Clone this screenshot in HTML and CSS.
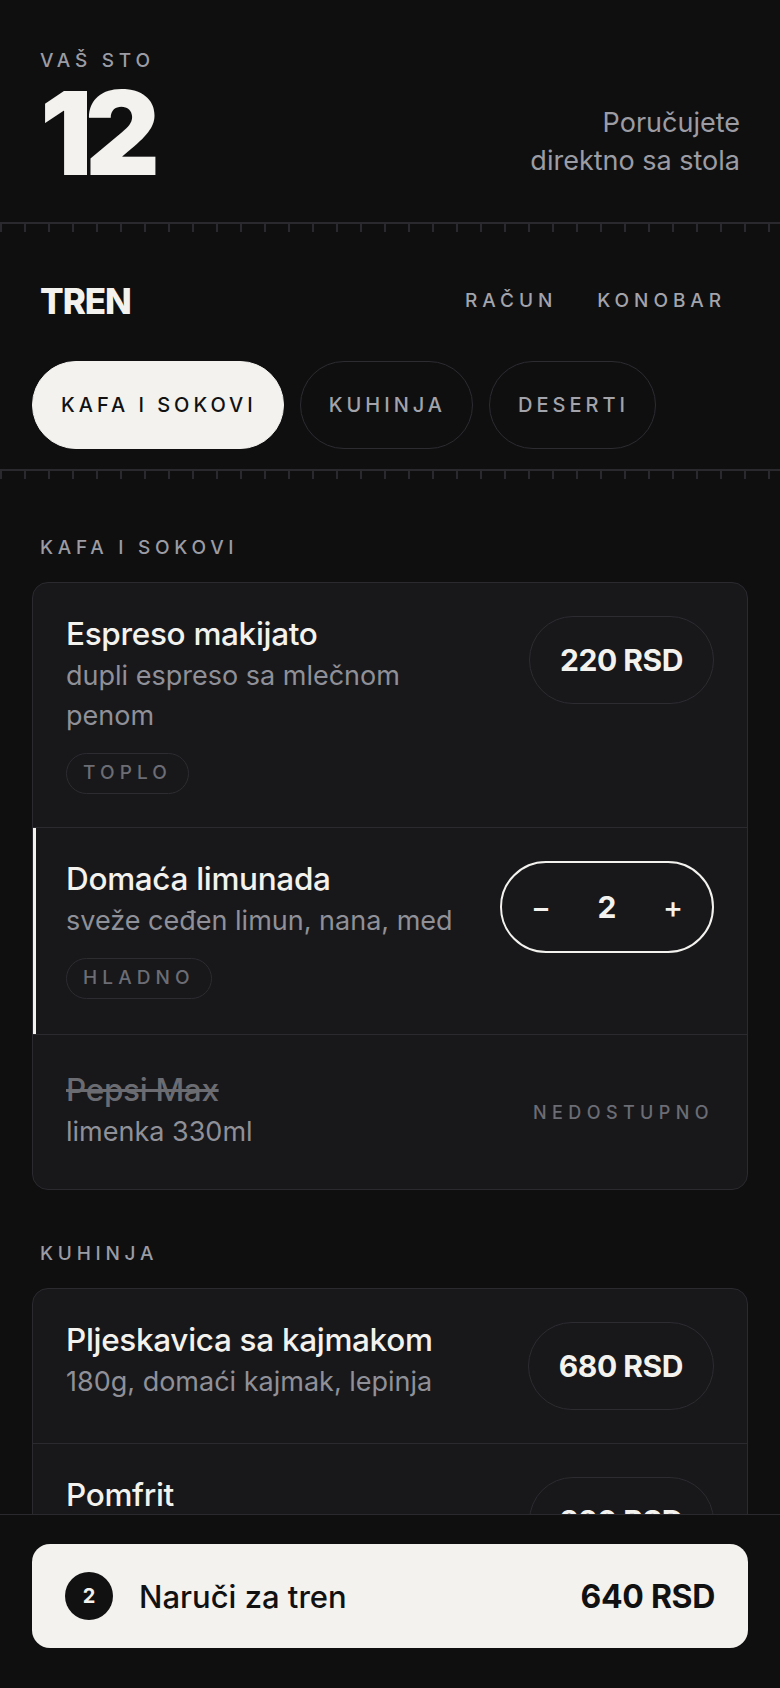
FILE: index.html
```html
<!DOCTYPE html>
<html lang="sr">
<head>
  <meta charset="UTF-8">
  <title>Tren — sto 12</title>
  <link rel="stylesheet" href="styles.css">
</head>
<body>

  <header class="table-head">
    <div class="table-id">
      <p class="eyebrow">Vaš sto</p>
      <div class="table-num">12</div>
    </div>
    <p class="table-note">Poručujete<br>direktno sa stola</p>
  </header>
  <div class="ruler"></div>

  <nav class="topbar">
    <div class="topbar-row">
      <span class="brand">TREN</span>
      <div class="links">
        <a href="#">Račun</a>
        <a href="#">Konobar</a>
      </div>
    </div>
    <div class="tabs">
      <button class="tab is-active">Kafa i sokovi</button>
      <button class="tab">Kuhinja</button>
      <button class="tab">Deserti</button>
    </div>
  </nav>
  <div class="ruler"></div>

  <main class="menu">
    <section class="group">
      <h3 class="eyebrow group-title">Kafa i sokovi</h3>
      <div class="card">
        <div class="item">
          <div class="item-info">
            <h4 class="item-name">Espreso makijato</h4>
            <p class="item-desc">dupli espreso sa mlečnom penom</p>
            <span class="tag">Toplo</span>
          </div>
          <button class="price">220 RSD</button>
        </div>

        <div class="item is-active">
          <div class="item-info">
            <h4 class="item-name">Domaća limunada</h4>
            <p class="item-desc">sveže ceđen limun, nana, med</p>
            <span class="tag">Hladno</span>
          </div>
          <div class="stepper">
            <button>&minus;</button>
            <span class="qty">2</span>
            <button>+</button>
          </div>
        </div>

        <div class="item is-off">
          <div class="item-info">
            <h4 class="item-name">Pepsi Max</h4>
            <p class="item-desc">limenka 330ml</p>
          </div>
          <span class="status">Nedostupno</span>
        </div>
      </div>
    </section>

    <section class="group">
      <h3 class="eyebrow group-title">Kuhinja</h3>
      <div class="card">
        <div class="item">
          <div class="item-info">
            <h4 class="item-name">Pljeskavica sa kajmakom</h4>
            <p class="item-desc">180g, domaći kajmak, lepinja</p>
          </div>
          <button class="price">680 RSD</button>
        </div>

        <div class="item">
          <div class="item-info">
            <h4 class="item-name">Pomfrit</h4>
            <p class="item-desc">sa začinima kuće</p>
          </div>
          <button class="price">320 RSD</button>
        </div>
      </div>
    </section>
  </main>

  <footer class="order-bar">
    <button class="order-btn">
      <span class="badge">2</span>
      <span class="order-label">Naruči za tren</span>
      <span class="order-total">640 RSD</span>
    </button>
  </footer>

</body>
</html>
```

FILE: styles.css
```css
* {
  box-sizing: border-box;
}
body {
  margin: 0;
  background: #0f0f10;
  color: #f3f2ee;
  font-family: "Inter", "Liberation Sans", sans-serif;
}
button {
  font-family: inherit;
  cursor: pointer;
}

.eyebrow {
  margin: 0;
  font-size: 19px;
  line-height: 22px;
  font-weight: 500;
  letter-spacing: 0.25em;
  text-transform: uppercase;
  color: #9b9ca4;
}

/* header */
.table-head {
  display: flex;
  justify-content: space-between;
  align-items: flex-end;
  padding: 50px 40px 30px;
}
.table-num {
  margin-top: 2px;
  font-size: 116px;
  line-height: 118px;
  font-weight: 900;
  letter-spacing: -0.065em;
}
.table-note {
  margin: 0 0 12px;
  text-align: right;
  font-size: 27px;
  line-height: 38px;
  color: #9b9ca4;
}

.ruler {
  height: 10px;
  border-top: 2px solid #2a2a2e;
  background: repeating-linear-gradient(to right, #2a2a2e 0 2px, transparent 2px 24px);
}

/* nav */
.topbar {
  padding: 48px 0 20px;
}
.topbar-row {
  display: flex;
  justify-content: space-between;
  align-items: center;
  padding: 0 40px;
}
.brand {
  font-size: 35px;
  line-height: 40px;
  font-weight: 800;
  letter-spacing: -0.03em;
}
.links {
  display: flex;
  gap: 12px;
}
.links a {
  padding: 9px 14px;
  font-size: 19px;
  font-weight: 500;
  letter-spacing: 0.26em;
  text-transform: uppercase;
  text-decoration: none;
  color: #a3a4ab;
}
.tabs {
  display: flex;
  gap: 16px;
  margin-top: 40px;
  padding: 0 32px;
}
.tab {
  height: 88px;
  padding: 0 26px 0 28px;
  border: 1.5px solid #2c2c31;
  border-radius: 44px;
  background: transparent;
  color: #a3a4ab;
  font-size: 20px;
  font-weight: 500;
  letter-spacing: 0.2em;
  text-transform: uppercase;
}
.tab.is-active {
  background: #f3f2ee;
  border-color: #f3f2ee;
  color: #111;
}

/* menu */
.menu {
  padding: 58px 32px 220px;
}
.group + .group {
  margin-top: 53px;
}
.group-title {
  padding-left: 8px;
  margin-bottom: 23px;
}
.card {
  background: #18181b;
  border: 1px solid #2a2a2f;
  border-radius: 16px;
  overflow: hidden;
}
.item {
  display: flex;
  justify-content: space-between;
  align-items: flex-start;
  gap: 32px;
  padding: 33px;
}
.item + .item {
  border-top: 1.5px solid #2a2a2f;
}
.item.is-active {
  box-shadow: inset 3px 0 0 #f3f2ee;
  padding-bottom: 35px;
}
.item-info {
  max-width: 400px;
}
.item-name {
  margin: 0;
  font-size: 31.5px;
  line-height: 36px;
  font-weight: 500;
  letter-spacing: -0.01em;
}
.item-desc {
  margin: 4px 0 0;
  font-size: 27px;
  line-height: 40px;
  color: #8f9098;
}
.tag {
  display: inline-block;
  margin-top: 17px;
  height: 41px;
  padding: 0 16px;
  border: 1.5px solid #2c2c31;
  border-radius: 21px;
  font-size: 19px;
  line-height: 38px;
  font-weight: 500;
  letter-spacing: 0.27em;
  text-transform: uppercase;
  color: #6c6d74;
}
.price {
  flex: none;
  height: 88px;
  padding: 0 30px;
  border: 1.5px solid #2c2c31;
  border-radius: 44px;
  background: transparent;
  color: #f3f2ee;
  font-size: 30px;
  font-weight: 700;
  letter-spacing: -0.015em;
}
.stepper {
  flex: none;
  display: grid;
  grid-template-columns: repeat(3, 1fr);
  align-items: center;
  width: 214px;
  height: 92px;
  padding: 0 6px;
  border: 2px solid #f3f2ee;
  border-radius: 46px;
}
.stepper button {
  border: 0;
  background: none;
  color: #f3f2ee;
  font-size: 30px;
  font-weight: 500;
}
.qty {
  text-align: center;
  font-size: 30px;
  font-weight: 700;
}
.item.is-off {
  align-items: center;
}
.item.is-off .item-name {
  color: #6b6b72;
  text-decoration: line-through;
}
.status {
  display: flex;
  align-items: center;
  height: 88px;
  font-size: 18px;
  font-weight: 500;
  letter-spacing: 0.3em;
  text-transform: uppercase;
  color: #6b6c74;
}

/* order bar */
.order-bar {
  position: fixed;
  left: 0;
  right: 0;
  bottom: 0;
  padding: 29px 32px 40px;
  background: #0f0f10;
  border-top: 1px solid #2a2a2e;
}
.order-btn {
  display: flex;
  align-items: center;
  width: 100%;
  height: 104px;
  padding: 0 33px;
  border: 0;
  border-radius: 18px;
  background: #f3f2ee;
  color: #111;
}
.badge {
  display: grid;
  place-items: center;
  width: 48px;
  height: 48px;
  margin-right: 26px;
  border-radius: 50%;
  background: #111;
  color: #f3f2ee;
  font-size: 20px;
  font-weight: 700;
}
.order-label {
  flex: 1;
  text-align: left;
  font-size: 31px;
  font-weight: 500;
}
.order-total {
  font-size: 32px;
  font-weight: 700;
  letter-spacing: -0.01em;
}
```
